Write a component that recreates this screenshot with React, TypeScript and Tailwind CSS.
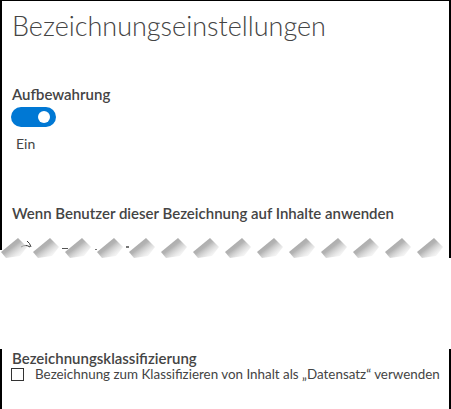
import React from "react";

const FONT = { fontFamily: 'Lato, "Open Sans", sans-serif' };

function Torn() {
  const peaks = Array.from({ length: 14 }, (_, i) => 18 + i * 32);
  return (
    <svg width="451" height="24" viewBox="0 236 451 24" className="block">
      <defs>
        <linearGradient id="tg" x1="0" y1="0" x2="1" y2="1">
          <stop offset="0" stopColor="#9a9a9a" />
          <stop offset="0.45" stopColor="#b4b4b4" />
          <stop offset="1" stopColor="#ffffff" stopOpacity="0" />
        </linearGradient>
      </defs>
      <rect x="0" y="236" width="2" height="14" fill="#000" />
      <rect x="449" y="236" width="2" height="22" fill="#000" />
      <path d="M21 247 A8 8 0 0 1 30 247" stroke="#333" strokeWidth="1" fill="none" />
      <path d="M27 241 Q30 243 31 247" stroke="#333" strokeWidth="1" fill="none" />
      <rect x="62" y="248" width="6" height="1" fill="#555" />
      <rect x="95" y="249" width="2" height="1" fill="#777" />
      <rect x="126" y="246" width="3" height="2" fill="#777" />
      {peaks.map((p) => (
        <polygon
          key={p}
          points={`${p - 17},252 ${p},238 ${p + 9},247 ${p + 2},256 ${p - 12},258`}
          fill="url(#tg)"
        />
      ))}
    </svg>
  );
}

export default function App() {
  return (
    <div className="w-[451px] h-[409px] overflow-hidden bg-white text-[#333]" style={FONT}>
      <div className="h-[236px] border-t border-l-2 border-r-2 border-black pl-[10px]">
        <div className="pt-[5px] text-[27px] font-light leading-[39px] text-[#444]">
          Bezeichnungseinstellungen
        </div>
        <div className="mt-[39px] text-[15px] font-semibold leading-[20px] text-[#444]">
          Aufbewahrung
        </div>
        <div className="mt-[3px] -ml-[1px] w-[45px] h-[20px] rounded-full bg-[#0078d4] flex items-center justify-end pr-[6px]">
          <div className="w-[12px] h-[12px] rounded-full bg-white" />
        </div>
        <div className="mt-[8px] ml-[4px] text-[14px] leading-[18px] text-[#444]">Ein</div>
        <div className="mt-[50px] text-[15px] font-semibold leading-[20px] text-[#444]">
          Wenn Benutzer dieser Bezeichnung auf Inhalte anwenden
        </div>
      </div>
      <Torn />
      <div className="h-[38px]" />
      <div className="h-[111px] border-l-2 border-r-2 border-b-2 border-black pl-[10px]">
        <div className="mt-[51px] text-[15px] font-semibold leading-[18px] text-[#444]">
          Bezeichnungsklassifizierung
        </div>
        <div className="h-[14px] flex items-center">
          <div className="shrink-0 w-[13px] h-[13px] border border-[#333] -ml-[1px]" />
          <span className="ml-[11px] whitespace-nowrap text-[13.4px] leading-[14px] text-[#444]">
            Bezeichnung zum Klassifizieren von Inhalt als „Datensatz“ verwenden
          </span>
        </div>
      </div>
    </div>
  );
}
